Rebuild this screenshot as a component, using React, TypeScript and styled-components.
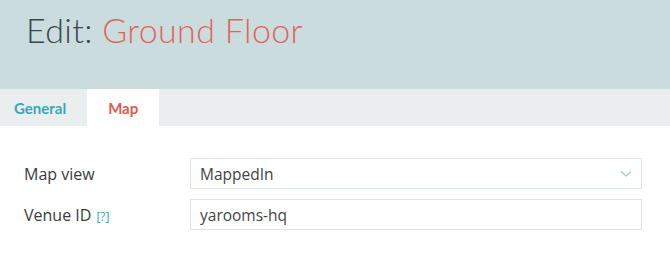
import React from "react";
import styled, { createGlobalStyle } from "styled-components";

const Global = createGlobalStyle`
  html, body { margin: 0; padding: 0; background: #ffffff; }
  body { font-family: "Open Sans", Lato, sans-serif; width: 670px; height: 272px; overflow: hidden; }
  * { box-sizing: border-box; }
`;

const Header = styled.header`
  height: 89px;
  background: #cbdcdf;
  padding: 13px 0 0 26px;
`;

const Title = styled.h1`
  margin: 0;
  font-family: Lato, sans-serif;
  font-weight: 300;
  font-size: 34px;
  line-height: 1;
  color: #3a474d;
  letter-spacing: 0.35px;
`;

const Accent = styled.span`
  color: #e0665a;
`;

const TabBar = styled.nav`
  display: flex;
  height: 37px;
  background: #ebeeee;
`;

const Tab = styled.div<{ $active?: boolean }>`
  display: flex;
  align-items: center;
  padding: 0 21px;
  font-family: Lato, sans-serif;
  font-size: 15px;
  font-weight: 700;
  color: ${(p) => (p.$active ? "#df5a4e" : "#3aa6ba")};
  background: ${(p) => (p.$active ? "#ffffff" : "transparent")};
  &:first-child { padding-left: 14px; }
`;

const Form = styled.form`
  padding: 32px 28px 0 24px;
  display: flex;
  flex-direction: column;
  gap: 10px;
`;

const Row = styled.div`
  display: grid;
  grid-template-columns: 166px 1fr;
  align-items: center;
`;

const Label = styled.label`
  font-size: 16px;
  color: #3b3b3b;
`;

const Help = styled.span`
  font-size: 12px;
  color: #3aa6ba;
  margin-left: 5px;
`;

const Field = styled.div`
  height: 31px;
  border: 1px solid #dbe7e7;
  display: flex;
  align-items: center;
  justify-content: space-between;
  padding: 0 9px 0 9px;
  font-size: 15.5px;
  color: #444;
`;

const Chevron = () => (
  <svg width="12" height="8" viewBox="0 0 12 8" fill="none">
    <path d="M1 1.5 L6 6 L11 1.5" stroke="#9fcbcf" strokeWidth="1.1" />
  </svg>
);

export default function App() {
  return (
    <>
      <Global />
      <Header>
        <Title>
          Edit: <Accent>Ground Floor</Accent>
        </Title>
      </Header>
      <TabBar>
        <Tab>General</Tab>
        <Tab $active>Map</Tab>
      </TabBar>
      <Form>
        <Row>
          <Label>Map view</Label>
          <Field>
            <span>MappedIn</span>
            <Chevron />
          </Field>
        </Row>
        <Row>
          <Label>
            Venue ID<Help>[?]</Help>
          </Label>
          <Field>
            <span>yarooms-hq</span>
          </Field>
        </Row>
      </Form>
    </>
  );
}
